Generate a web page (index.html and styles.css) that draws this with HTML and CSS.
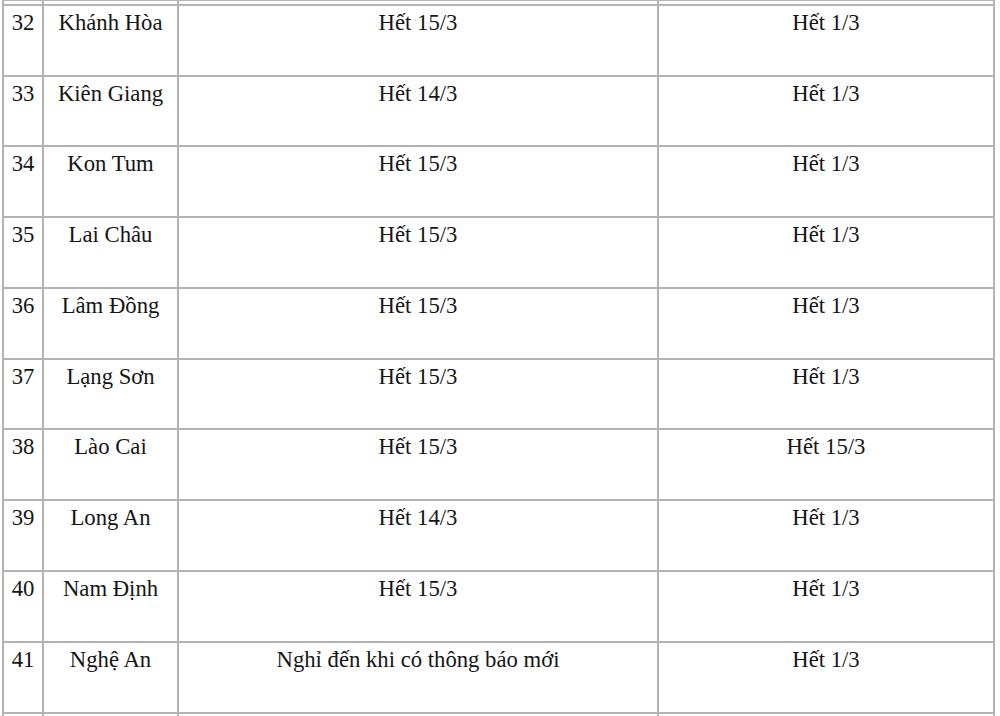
FILE: index.html
```html
<!DOCTYPE html>
<html lang="vi">
<head>
<meta charset="utf-8">
<title>Lịch nghỉ học</title>
<link rel="stylesheet" href="styles.css">
</head>
<body>
<table class="schedule">
  <colgroup>
    <col class="c-no">
    <col class="c-prov">
    <col class="c-a">
    <col class="c-b">
  </colgroup>
  <tbody>
    <tr class="clip"><td></td><td></td><td></td><td></td></tr>
    <tr><td>32</td><td>Khánh Hòa</td><td>Hết 15/3</td><td>Hết 1/3</td></tr>
    <tr class="short"><td>33</td><td>Kiên Giang</td><td>Hết 14/3</td><td>Hết 1/3</td></tr>
    <tr><td>34</td><td>Kon Tum</td><td>Hết 15/3</td><td>Hết 1/3</td></tr>
    <tr><td>35</td><td>Lai Châu</td><td>Hết 15/3</td><td>Hết 1/3</td></tr>
    <tr><td>36</td><td>Lâm Đồng</td><td>Hết 15/3</td><td>Hết 1/3</td></tr>
    <tr class="short"><td>37</td><td>Lạng Sơn</td><td>Hết 15/3</td><td>Hết 1/3</td></tr>
    <tr><td>38</td><td>Lào Cai</td><td>Hết 15/3</td><td>Hết 15/3</td></tr>
    <tr><td>39</td><td>Long An</td><td>Hết 14/3</td><td>Hết 1/3</td></tr>
    <tr><td>40</td><td>Nam Định</td><td>Hết 15/3</td><td>Hết 1/3</td></tr>
    <tr><td>41</td><td>Nghệ An</td><td>Nghỉ đến khi có thông báo mới</td><td>Hết 1/3</td></tr>
    <tr class="clip"><td></td><td></td><td></td><td></td></tr>
  </tbody>
</table>
</body>
</html>
```

FILE: styles.css
```css
html, body {
  margin: 0;
  padding: 0;
  background: #ffffff;
}

body {
  overflow: hidden;
  height: 716px;
}

.schedule {
  border-collapse: collapse;
  table-layout: fixed;
  width: 991px;
  margin: -1px 0 0 2px;
  font-family: "Liberation Serif", "Times New Roman", serif;
  font-size: 22.7px;
  color: #151515;
}

.c-no { width: 40px; }
.c-prov { width: 135px; }
.c-a { width: 480px; }
.c-b { width: 336px; }

.schedule td {
  border: 2px solid #b3b3b3;
  text-align: center;
  vertical-align: top;
  padding: 4px 2px 0;
  height: 71px;
  box-sizing: border-box;
  white-space: nowrap;
}

.schedule tr.short td {
  height: 70px;
}

.schedule tr.clip td {
  height: 5px;
  padding: 0;
}
```
